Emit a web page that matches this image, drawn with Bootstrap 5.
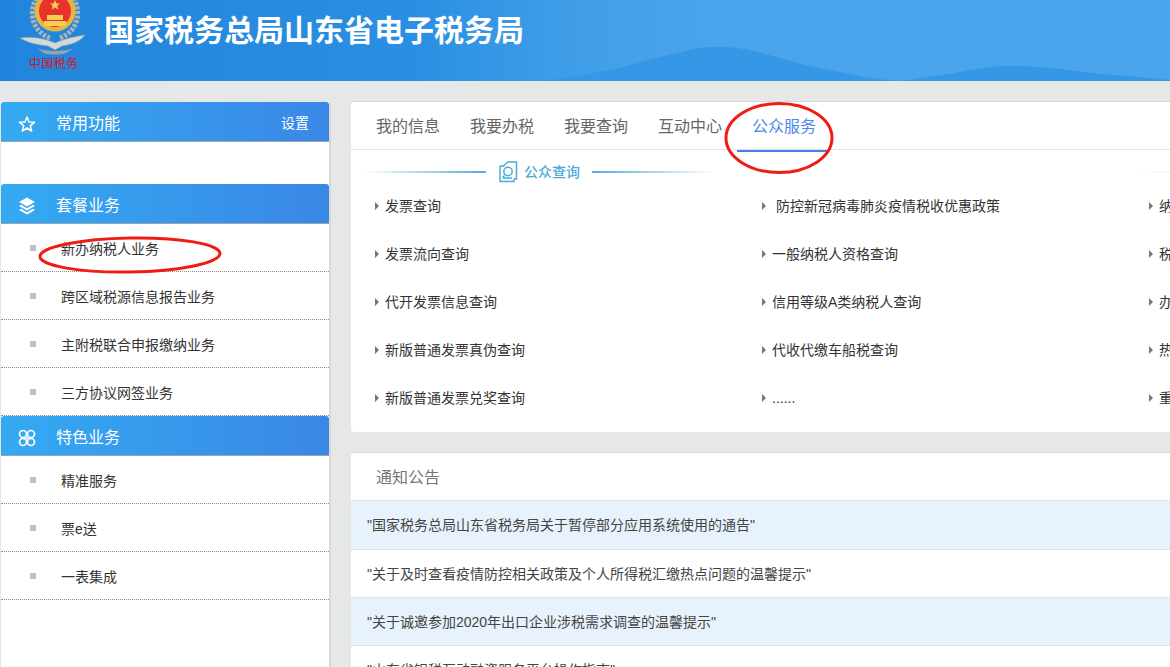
<!DOCTYPE html>
<html lang="zh-CN">
<head>
  <meta charset="UTF-8">
  <meta name="viewport" content="width=device-width, initial-scale=1.0">
  <title>国家税务总局山东省电子税务局</title>
  <link href="https://cdn.jsdelivr.net/npm/bootstrap@5.3.0/dist/css/bootstrap.min.css" rel="stylesheet">
  <style>
    html, body { height: 667px; overflow: hidden; }
    body { background: #e6e8e7; font-family: "Liberation Sans", "Noto Sans CJK SC", sans-serif; font-size: 14px; color: #333; position: relative; }
    .site-head { height: 81px; background: linear-gradient(90deg, #2185dd 0%, #2a8ee2 35%, #3f9de8 48%, #4aa4eb 60%, #4ba5ec 100%); position: relative; overflow: hidden; }
    .site-hills { position: absolute; left: 0; top: 0; width: 1170px; height: 81px; }
    .site-logo { position: relative; width: 80px; height: 81px; margin-left: 14px; flex: none; }
    .site-title { position: relative; color: #fff; font-size: 30px; font-weight: 700; line-height: 1; margin: 0 0 0 10px; padding-bottom: 20px; white-space: nowrap; }
    .page-wrap { padding: 20px 0 0 1px; gap: 20px; width: 1170px; }
    .side-col { width: 330px; height: 566px; margin-top: 1px; background: #fff; border-right: 2px solid #d8d8d8; flex: none; }
    .side-head { height: 40px; padding: 4px 20px 0 17px; color: #fff; font-size: 16px; background: linear-gradient(90deg, #34aaf2, #3a87e6); border-bottom: 1px solid #9aa5b0; border-radius: 3px 3px 0 0; }
    .side-name { margin-left: 20px; }
    .side-icon { width: 18px; height: 18px; flex: none; }
    .side-set { font-size: 14px; margin-left: auto; }
    .side-empty { height: 42px; }
    .side-row { height: 48px; padding: 3px 0 0 29px; border-bottom: 1px dotted #8a8a8a; color: #333; font-size: 14px; }
    .side-row::before { content: ""; width: 6px; height: 6px; background: #c0c0c0; margin-right: 25px; margin-top: -2px; flex: none; }
    .main-col { flex: 1 1 0; min-width: 0; overflow: hidden; }
    .panel-box { background: #fff; border-radius: 3px 0 0 3px; border-top: 1px solid #d8d8d8; overflow: hidden; }
    .tab-bar { height: 48px; border-bottom: 1px solid #e4e4e4; padding-left: 10px; }
    .tab-item { padding: 0 15px; box-sizing: content-box; width: 64px; font-size: 16px; color: #666; line-height: 49px; height: 48px; white-space: nowrap; flex: none; }
    .tab-item.on { color: #4d88e8; border-bottom: 2px solid #4480e6; padding-right: 13px; }
    .query-head { height: 32px; padding: 12px 0 0 12px; width: 1000px; }
    .query-line { height: 2px; width: 123px; flex: none; }
    .query-line.to-r { background: linear-gradient(90deg, #fff, #55acdc); }
    .query-line.to-l { background: linear-gradient(90deg, #55acdc, #fff); }
    .query-line.to-g { background: linear-gradient(90deg, #fff, #cfe8c8); margin-left: 422px; }
    .query-name { color: #4eaadb; font-size: 14px; font-weight: 500; margin: 0 12px 0 6px; white-space: nowrap; }
    .query-icon { width: 20px; height: 22px; margin-left: 12px; flex: none; }
    .query-list { display: grid; grid-template-columns: 387px 387px 100px; padding: 0 0 10px 24px; width: 1000px; }
    .query-cell { height: 48px; font-size: 14px; color: #333; white-space: nowrap; display: flex; align-items: center; }
    .query-cell::before { content: ""; border-left: 4px solid #777; border-top: 4px solid transparent; border-bottom: 4px solid transparent; margin-right: 6px; }
    .notice-box { margin-top: 20px; }
    .notice-title { height: 48px; line-height: 50px; padding-left: 25px; font-size: 16px; color: #777; border-bottom: 1px solid #e0e4e8; }
    .notice-row { height: 48px; line-height: 48px; padding-left: 16px; font-size: 14px; color: #444; border-bottom: 1px solid #e0e4e8; white-space: nowrap; }
    .notice-row.tint { background: #e8f2fc; }
    .notice-row.first-row { height: 49px; }
    .mark-up { position: absolute; left: 0; top: 0; width: 1170px; height: 667px; pointer-events: none; }
  </style>
</head>
<body>
  <header class="site-head d-flex align-items-center">
    <svg class="site-hills" viewBox="0 0 1170 81" preserveAspectRatio="none">
      <path d="M540 81 C570 78 600 72 620 68 C640 62 670 54 700 48 C725 44 755 50 780 58 C805 66 830 70 850 74 C870 78 885 80 900 81 C920 78 935 76 950 74 C970 70 990 66 1007 66 C1040 66 1070 70 1100 74 C1130 76 1150 78 1170 80 L1170 81 Z" fill="#3597e5"/>
    </svg>
    <svg class="site-logo" viewBox="14 0 80 81">
      <path d="M36 -2 C28 16 34 32 50 38 M74 -2 C82 16 76 32 60 38" fill="none" stroke="#aab3b6" stroke-width="5" stroke-dasharray="3 1.500"/>
      <circle cx="55" cy="11" r="20.500" fill="#e6b63f"/>
      <circle cx="55" cy="11" r="16" fill="#e8322b"/>
      <path d="M44 21 H66 V26 H44 Z M47 15 H63 V20 H47 Z" fill="#f4cf57"/>
      <path d="M55 0 L56.500 3.500 L60 3.500 L57.300 5.800 L58.300 9.500 L55 7.400 L51.700 9.500 L52.700 5.800 L50 3.500 L53.500 3.500 Z" fill="#f4cf57"/>
      <path d="M20 38 C32 36 44 38 55 43 C66 38 78 36 85 35 C80 42 70 45 62 46 L55 50 L48 46 C38 45 28 43 20 38 Z" fill="#d3d8da" stroke="#8d979e" stroke-width=".6"/>
      <path d="M36 48 C45 52 65 52 74 48 L66 53 C60 55 50 55 44 53 Z" fill="#9aa3a8"/>
      <text x="29" y="68" font-size="12" letter-spacing=".4" font-family="Noto Sans CJK SC" fill="#d8141c">中国税务</text>
    </svg>
    <h1 class="site-title">国家税务总局山东省电子税务局</h1>
  </header>

  <div class="page-wrap d-flex align-items-start">
    <aside class="side-col">
      <div class="side-head d-flex align-items-center">
        <svg class="side-icon" viewBox="0 0 18 18"><path d="M9 2 L11 7 L16.500 7.300 L12.300 10.700 L13.700 16 L9 13 L4.300 16 L5.700 10.700 L1.500 7.300 L7 7 Z" fill="none" stroke="#fff" stroke-width="1.500" stroke-linejoin="round"/></svg>
        <span class="side-name">常用功能</span>
        <span class="side-set">设置</span>
      </div>
      <div class="side-empty"></div>
      <div class="side-head d-flex align-items-center">
        <svg class="side-icon" viewBox="0 0 18 18"><path d="M9 .5 L17 5 L9 9.500 L1 5 Z" fill="#fff"/><path d="M3 7.800 L1 9 L9 13.500 L17 9 L15 7.800 L9 11.200 Z" fill="#fff"/><path d="M3 11.800 L1 13 L9 17.500 L17 13 L15 11.800 L9 15.200 Z" fill="#fff"/></svg>
        <span class="side-name">套餐业务</span>
      </div>
      <div class="side-row d-flex align-items-center">新办纳税人业务</div>
      <div class="side-row d-flex align-items-center">跨区域税源信息报告业务</div>
      <div class="side-row d-flex align-items-center">主附税联合申报缴纳业务</div>
      <div class="side-row d-flex align-items-center">三方协议网签业务</div>
      <div class="side-head d-flex align-items-center">
        <svg class="side-icon" viewBox="0 0 18 18"><g fill="none" stroke="#fff" stroke-width="1.700"><circle cx="5" cy="5" r="3.500"/><circle cx="13" cy="5" r="3.500"/><circle cx="5" cy="13" r="3.500"/><circle cx="13" cy="13" r="3.500"/></g><rect x="7" y="7" width="4" height="4" fill="#cfe9fb"/></svg>
        <span class="side-name">特色业务</span>
      </div>
      <div class="side-row d-flex align-items-center">精准服务</div>
      <div class="side-row d-flex align-items-center">票e送</div>
      <div class="side-row d-flex align-items-center">一表集成</div>
    </aside>

    <main class="main-col">
      <section class="panel-box">
        <nav class="tab-bar d-flex">
          <div class="tab-item">我的信息</div>
          <div class="tab-item">我要办税</div>
          <div class="tab-item">我要查询</div>
          <div class="tab-item">互动中心</div>
          <div class="tab-item on">公众服务</div>
        </nav>
        <div class="query-head d-flex align-items-center">
          <div class="query-line to-r"></div>
          <svg class="query-icon" viewBox="0 0 20 22"><path d="M6 4 L10 1 H18.500 V18 H16" fill="none" stroke="#4eaadb" stroke-width="1.500"/><path d="M2 5 H6 L6 4 M2 5 V20.500 H16 V18" fill="none" stroke="#4eaadb" stroke-width="1.500"/><circle cx="10" cy="10.500" r="4.200" fill="none" stroke="#4eaadb" stroke-width="1.500"/><path d="M6.500 14.500 L4.500 16.500 M5 17 H14" stroke="#4eaadb" stroke-width="1.500"/></svg>
          <span class="query-name">公众查询</span>
          <div class="query-line to-l"></div>
          <div class="query-line to-g"></div>
        </div>
        <div class="query-list">
          <div class="query-cell">发票查询</div>
          <div class="query-cell">&nbsp;防控新冠病毒肺炎疫情税收优惠政策</div>
          <div class="query-cell">纳</div>
          <div class="query-cell">发票流向查询</div>
          <div class="query-cell">一般纳税人资格查询</div>
          <div class="query-cell">税</div>
          <div class="query-cell">代开发票信息查询</div>
          <div class="query-cell">信用等级A类纳税人查询</div>
          <div class="query-cell">办</div>
          <div class="query-cell">新版普通发票真伪查询</div>
          <div class="query-cell">代收代缴车船税查询</div>
          <div class="query-cell">热</div>
          <div class="query-cell">新版普通发票兑奖查询</div>
          <div class="query-cell">......</div>
          <div class="query-cell">重</div>
        </div>
      </section>
      <section class="panel-box notice-box">
        <div class="notice-title">通知公告</div>
        <div class="notice-row tint first-row">"国家税务总局山东省税务局关于暂停部分应用系统使用的通告"</div>
        <div class="notice-row">"关于及时查看疫情防控相关政策及个人所得税汇缴热点问题的温馨提示"</div>
        <div class="notice-row tint">"关于诚邀参加2020年出口企业涉税需求调查的温馨提示"</div>
        <div class="notice-row">"山东省银税互动融资服务平台操作指南"</div>
      </section>
    </main>
  </div>

  <svg class="mark-up" viewBox="0 0 1170 667">
    <ellipse cx="130" cy="255" rx="90" ry="17" fill="none" stroke="#f01c14" stroke-width="3" transform="rotate(-1 130 255)"/>
    <ellipse cx="779" cy="138" rx="53" ry="34.500" fill="none" stroke="#f01c14" stroke-width="3"/>
  </svg>

  <script src="https://cdn.jsdelivr.net/npm/bootstrap@5.3.0/dist/js/bootstrap.bundle.min.js"></script>
</body>
</html>
